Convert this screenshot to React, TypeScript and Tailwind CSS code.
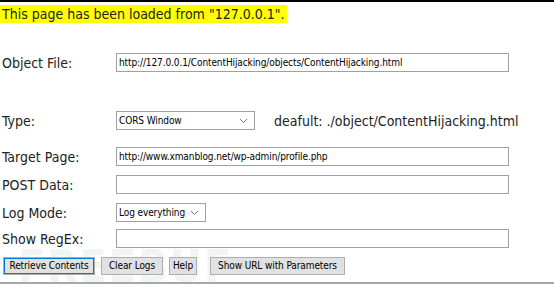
export default function App() {
  const label = "w-[116px] shrink-0 pl-[2px] text-[14px] leading-none text-[#222]";
  const field =
    "h-[19px] shrink-0 border border-[#a0a0a0] bg-white px-[2px] text-[10px] leading-[17px] whitespace-nowrap text-black font-['DejaVu_Sans_Condensed','Liberation_Sans',sans-serif] tracking-[-0.1px]";
  const btn =
    "h-[18px] shrink-0 border border-[#adadad] bg-[#e1e1e1] text-center text-[10px] leading-[16px] whitespace-nowrap text-black font-['DejaVu_Sans_Condensed','Liberation_Sans',sans-serif] tracking-[-0.1px]";
  const row = "flex h-[19px] items-center";

  return (
    <main className="relative w-[554px] h-[287px] overflow-hidden bg-white font-['DejaVu_Sans_Condensed','DejaVu_Sans',sans-serif] border-t-2 border-black">
      <div className="mt-[3px] w-fit bg-[#ffff00] px-[2px] h-[18px] leading-[18px] text-[14px] text-[#222]">
        This page has been loaded from "127.0.0.1".
      </div>

      <div className={`mt-[30px] ${row}`}>
        <span className={label}>Object File:</span>
        <div className={`${field} w-[393px] overflow-hidden`}>
          http://127.0.0.1/ContentHijacking/objects/ContentHijacking.html
        </div>
      </div>

      <div className={`mt-[39px] ${row}`}>
        <span className={label}>Type:</span>
        <div className={`${field} w-[139px] flex items-center justify-between`}>
          <span>CORS Window</span>
          <svg width="9" height="6" viewBox="0 0 9 6" className="mr-[4px]">
            <path d="M1 1l3.5 3.5L8 1" fill="none" stroke="#777" strokeWidth="1" />
          </svg>
        </div>
        <span className="ml-[19px] text-[14px] leading-none text-[#222]">deafult: ./object/ContentHijacking.html</span>
      </div>

      <div className={`mt-[17px] ${row}`}>
        <span className={label}>Target Page:</span>
        <div className={`${field} w-[393px] overflow-hidden`}>
          http://www.xmanblog.net/wp-admin/profile.php
        </div>
      </div>

      <div className={`mt-[9px] ${row}`}>
        <span className={label}>POST Data:</span>
        <div className={`${field} w-[393px]`} />
      </div>

      <div className={`mt-[9px] ${row}`}>
        <span className={label}>Log Mode:</span>
        <div className={`${field} w-[90px] flex items-center justify-between`}>
          <span>Log everything</span>
          <svg width="9" height="6" viewBox="0 0 9 6" className="mr-[4px]">
            <path d="M1 1l3.5 3.5L8 1" fill="none" stroke="#777" strokeWidth="1" />
          </svg>
        </div>
      </div>

      <div className={`mt-[7px] ${row}`}>
        <span className={label}>Show RegEx:</span>
        <div className={`${field} w-[393px]`} />
      </div>

      <div className="relative mt-[9px] flex h-[18px] items-center gap-[6px] pl-[3px]">
        <span className="pointer-events-none absolute left-[18px] top-[-12px] text-[44px] font-bold leading-none tracking-[2px] text-[#f0f5f2] select-none">
          FREEBUF
        </span>
        <button className={`${btn} relative w-[92px] border-[#0078d7] outline outline-1 outline-[#0078d7] -outline-offset-2`}>Retrieve Contents</button>
        <button className={`${btn} relative w-[62px]`}>Clear Logs</button>
        <button className={`${btn} relative w-[28px]`}>Help</button>
        <button className={`${btn} relative ml-[7px] w-[135px]`}>Show URL with Parameters</button>
      </div>

      <div className="absolute bottom-[3px] left-0 right-0 h-[2px] bg-[#a8a8a8]" />
    </main>
  );
}
